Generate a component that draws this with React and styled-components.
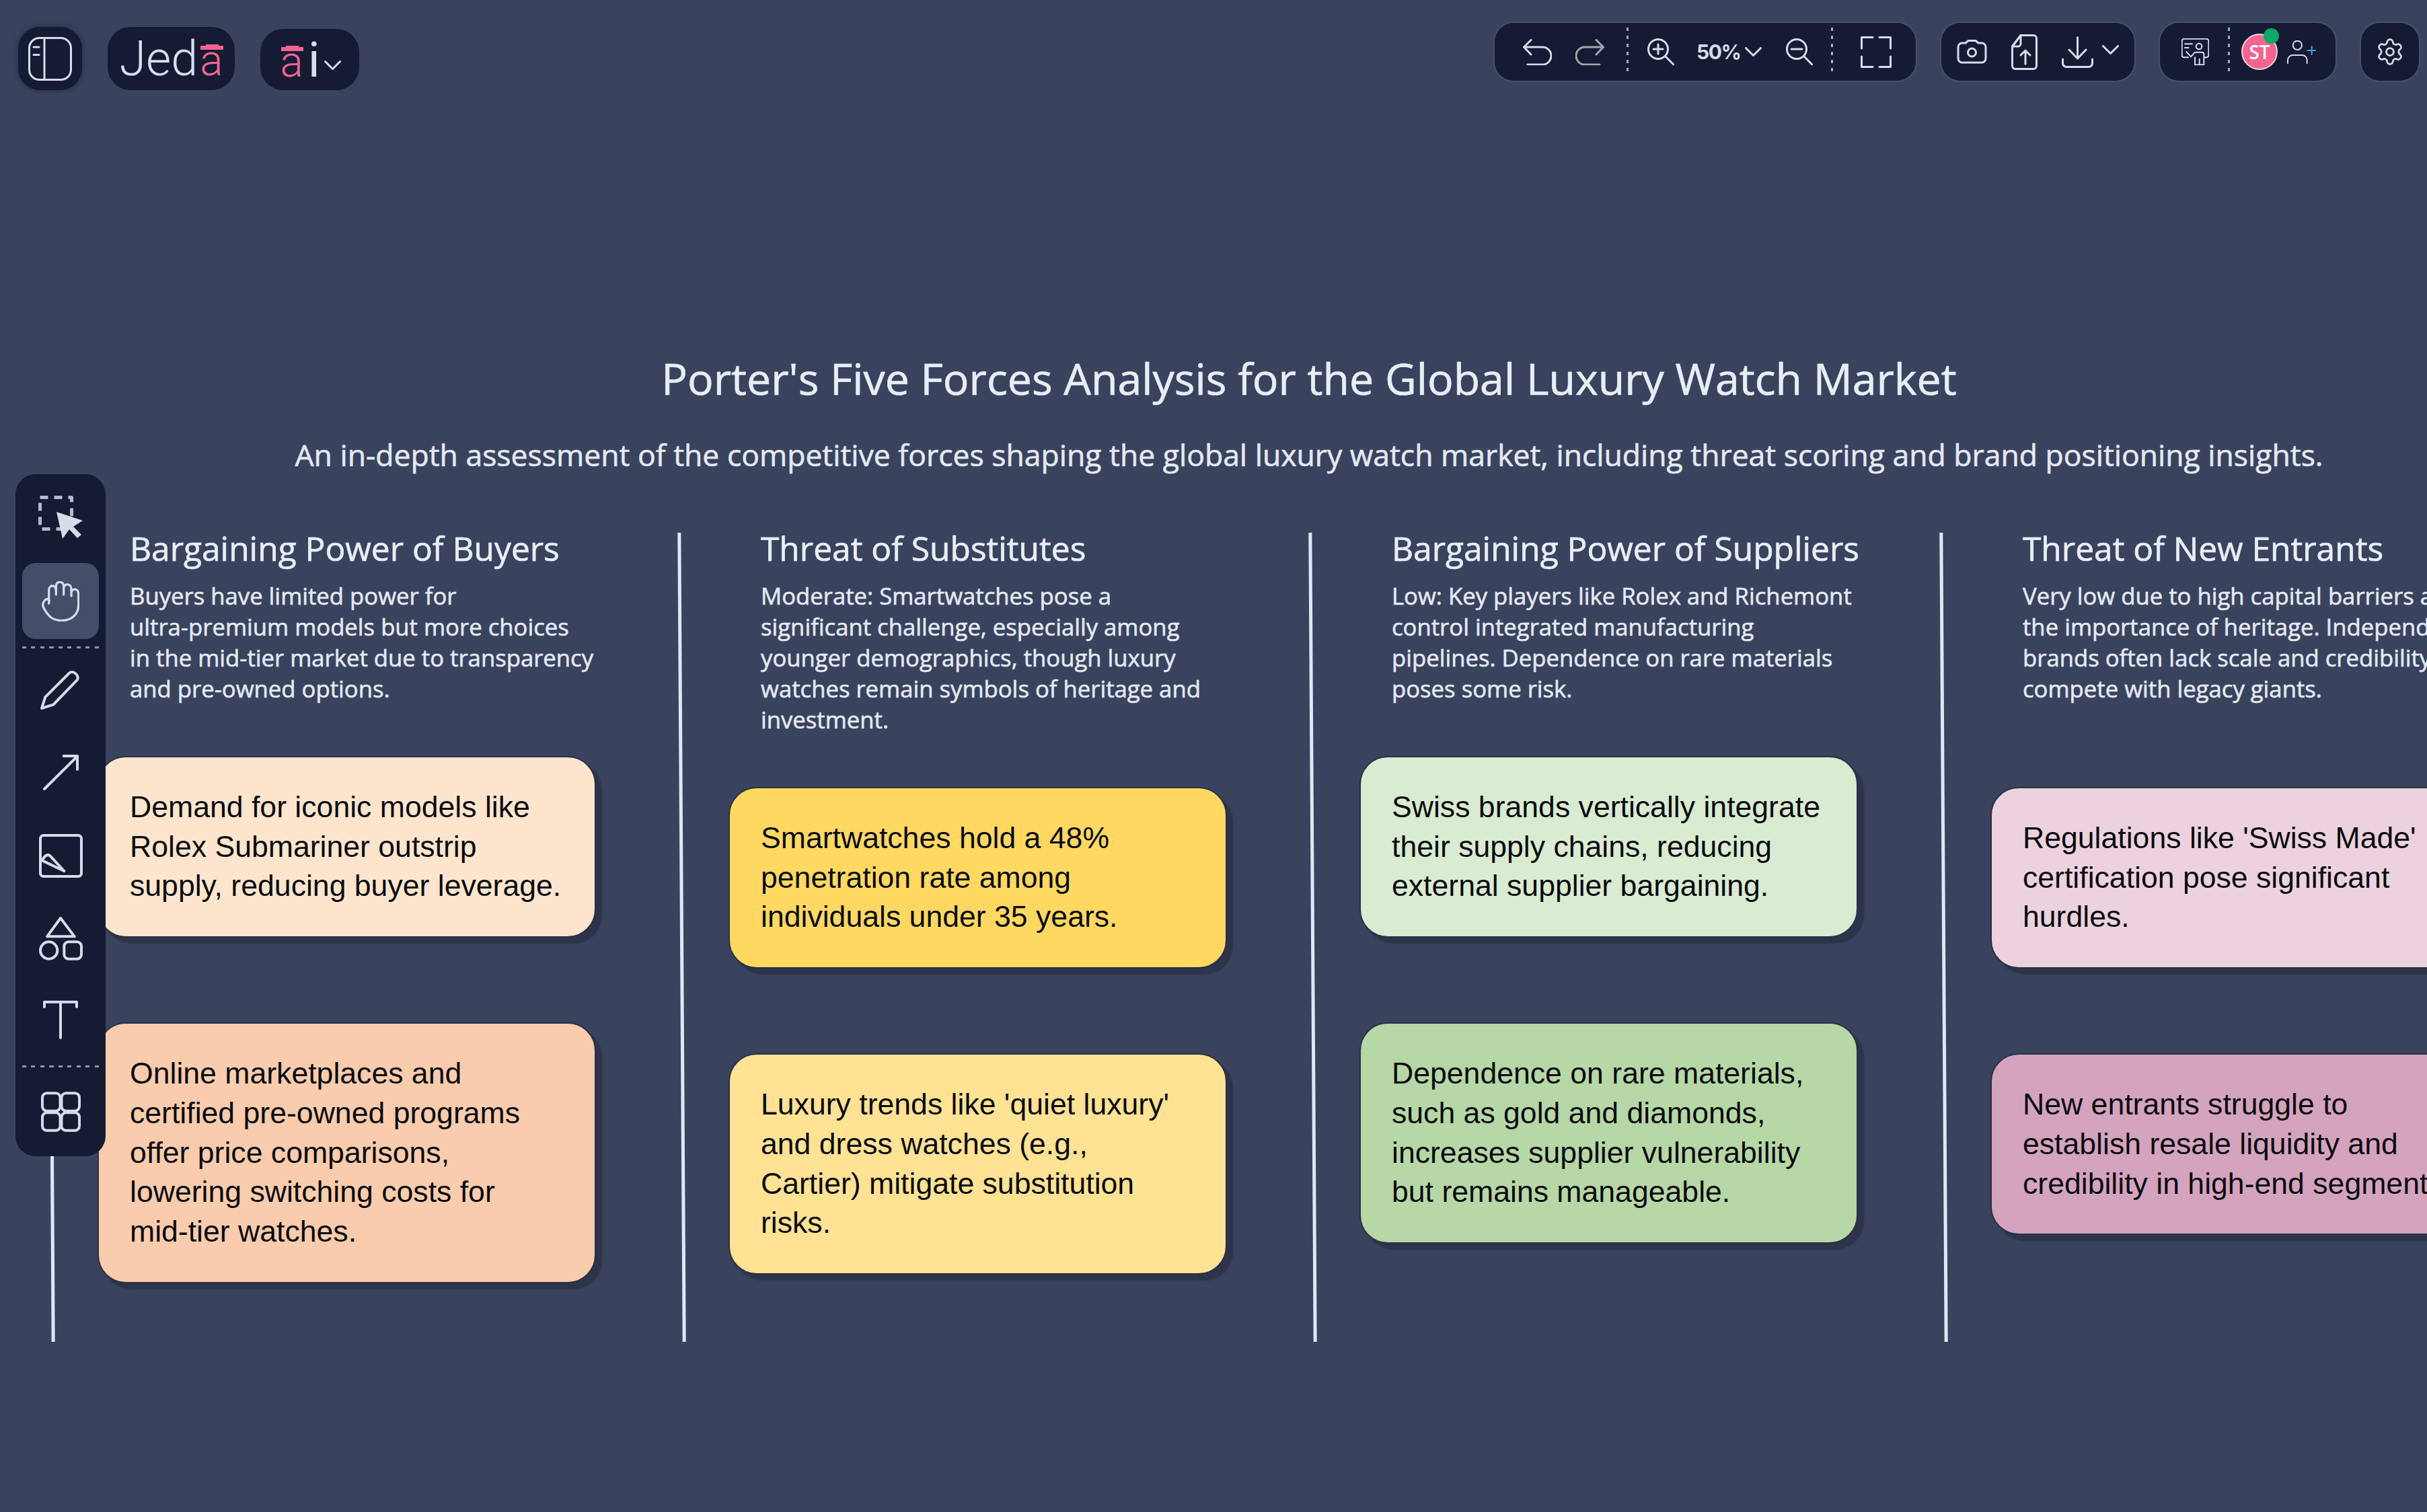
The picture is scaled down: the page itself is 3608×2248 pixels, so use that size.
import React from 'react';
import styled, { createGlobalStyle } from 'styled-components';
import { Settings } from 'lucide-react';

const GlobalStyle = createGlobalStyle`
  html, body {
    margin: 0;
    padding: 0;
    background: #3a435e;
    overflow: hidden;
  }
`;

const panel = '#151b33';
const ink = '#d5dcea';

// board content
const forces = [
  {
    title: 'Bargaining Power of Buyers',
    body: 'Buyers have limited power for\nultra-premium models but more choices\nin the mid-tier market due to transparency\nand pre-owned options.',
    cards: [
      { color: '#fde5cd', text: 'Demand for iconic models like\nRolex Submariner outstrip\nsupply, reducing buyer leverage.' },
      { color: '#f8ccac', text: 'Online marketplaces and\ncertified pre-owned programs\noffer price comparisons,\nlowering switching costs for\nmid-tier watches.' },
    ],
  },
  {
    title: 'Threat of Substitutes',
    body: 'Moderate: Smartwatches pose a\nsignificant challenge, especially among\nyounger demographics, though luxury\nwatches remain symbols of heritage and\ninvestment.',
    cards: [
      { color: '#ffd862', text: 'Smartwatches hold a 48%\npenetration rate among\nindividuals under 35 years.' },
      { color: '#ffe293', text: "Luxury trends like 'quiet luxury'\nand dress watches (e.g.,\nCartier) mitigate substitution\nrisks." },
    ],
  },
  {
    title: 'Bargaining Power of Suppliers',
    body: 'Low: Key players like Rolex and Richemont\ncontrol integrated manufacturing\npipelines. Dependence on rare materials\nposes some risk.',
    cards: [
      { color: '#d9ebd1', text: 'Swiss brands vertically integrate\ntheir supply chains, reducing\nexternal supplier bargaining.' },
      { color: '#b6d7a6', text: 'Dependence on rare materials,\nsuch as gold and diamonds,\nincreases supplier vulnerability\nbut remains manageable.' },
    ],
  },
  {
    title: 'Threat of New Entrants',
    body: 'Very low due to high capital barriers and\nthe importance of heritage. Independent\nbrands often lack scale and credibility to\ncompete with legacy giants.',
    bodyGap: '123px',
    cards: [
      { color: '#ecd2de', text: "Regulations like 'Swiss Made'\ncertification pose significant\nhurdles." },
      { color: '#d4a3bd', text: 'New entrants struggle to\nestablish resale liquidity and\ncredibility in high-end segments.' },
    ],
  },
];

// icons
const Svg = ({ w, h, vb, sw = 3, color = ink, children }) => (
  <svg
    width={w}
    height={h}
    viewBox={vb || `0 0 ${w} ${h}`}
    fill="none"
    stroke={color}
    strokeWidth={sw}
    strokeLinecap="round"
    strokeLinejoin="round"
  >
    {children}
  </svg>
);

const PanelIcon = () => (
  <Svg w={65} h={65}>
    <rect x="1.5" y="1.5" width="62" height="62" rx="15" />
    <path d="M24 1.5V63.5M8 15H16M8 26.5H16" />
  </Svg>
);
const Undo = () => (
  <Svg w={43} h={39}>
    <path d="M12 1.5L1.5 12L12 23M1.5 12H29A13 13 0 0 1 29 38H7" />
  </Svg>
);
const Redo = () => (
  <Svg w={43} h={39} color="#a3a7ae">
    <path d="M31 1.5L41.5 12L31 23M41.5 12H14A13 13 0 0 0 14 38H36" />
  </Svg>
);
const ZoomIn = () => (
  <Svg w={40} h={40}>
    <circle cx="16" cy="16" r="14.5" />
    <path d="M27 27L39 39M16 9V23M9 16H23" />
  </Svg>
);
const ZoomOut = () => (
  <Svg w={40} h={40}>
    <circle cx="16" cy="16" r="14.5" />
    <path d="M27 27L39 39M8 16H24" />
  </Svg>
);
const Chevron = () => (
  <Svg w={25} h={14}>
    <path d="M1.5 1.5L12.5 12.5L23.5 1.5" />
  </Svg>
);
const Fullscreen = () => (
  <Svg w={46} h={47}>
    <path d="M18 1.5H1.5V18M28 1.5H44.5V18M1.5 30V45.5H18M44.5 30V45.5H28" />
  </Svg>
);
const Camera = () => (
  <Svg w={45} h={36}>
    <path d="M2 11A6 6 0 0 1 8 5H13L17 1.5H28L32 5H37A6 6 0 0 1 43 11V28A6 6 0 0 1 37 34H8A6 6 0 0 1 2 28Z" />
    <circle cx="22.5" cy="19" r="6" />
  </Svg>
);
const FileUpload = () => (
  <Svg w={39} h={53}>
    <path d="M14 1.5H33A4.5 4.5 0 0 1 37.5 6V47A4.5 4.5 0 0 1 33 51.5H6A4.5 4.5 0 0 1 1.5 47V18Z" />
    <path d="M14 1.5L1.5 18H10A4 4 0 0 0 14 14ZM21 44V24M14 31L21 24L28 31" />
  </Svg>
);
const Download = () => (
  <Svg w={47} h={47}>
    <path d="M23.5 1.5V33M11 20L23.5 33L36 20M1.5 34V40A5.5 5.5 0 0 0 7 45.5H40A5.5 5.5 0 0 0 45.5 40V34" />
  </Svg>
);
const Presenter = () => (
  <Svg w={41} h={40} vb="0 0 123 120" sw={6}>
    <path d="M30 85H12A10 10 0 0 1 2 75V12A10 10 0 0 1 12 2H111A10 10 0 0 1 121 12V75A10 10 0 0 1 111 85H101" />
    <path d="M15 25H48M15 42H32" />
    <circle cx="78" cy="36" r="13" />
    <path d="M22 60L42 82L60 62H92A8 8 0 0 1 100 70V118H60V85M80 92V118" />
  </Svg>
);
const AddUser = () => (
  <Svg w={43} h={35} vb="0 0 129 105" sw={6}>
    <circle cx="46" cy="22" r="20" />
    <path d="M3 102V88A22 22 0 0 1 25 66H67A22 22 0 0 1 89 88V102" />
    <path d="M92 45H127M110 27V63" stroke="#3ba3e3" />
  </Svg>
);

const SelectIcon = () => (
  <Svg w={66} h={65} sw={5}>
    <rect x="2.5" y="2.5" width="47" height="47" strokeDasharray="12 9" stroke="#b3bac8" strokeLinecap="butt" />
    <path d="M27 24L66 37L52 46L64 58L58 63L46 50L36 64Z" fill="#d5dcea" stroke="none" />
  </Svg>
);
const HandIcon = () => (
  <Svg w={56} h={60} vb="0 0 168 180" sw={10}>
    <path d="M32 100V42C32 14 62 14 64 42V60M64 42V22C64 -2 98 -2 98 22V60M98 34C98 8 132 8 132 36V66M132 54C134 30 164 30 164 58V108C164 150 130 176 90 176C50 176 30 160 8 118C-2 96 22 68 34 86" />
  </Svg>
);
const PencilIcon = () => (
  <Svg w={60} h={60} vb="0 0 180 180" sw={12}>
    <path d="M6 174L22 124L128 18C146 0 180 32 162 50L58 158Z" />
  </Svg>
);
const ArrowIcon = () => (
  <Svg w={53} h={53} vb="0 0 159 159" sw={12}>
    <path d="M6 153L152 8M92 6H153V66" />
  </Svg>
);
const ImageIcon = () => (
  <Svg w={65} h={65} vb="0 0 195 195" sw={12}>
    <rect x="6" y="6" width="183" height="183" rx="14" />
    <path d="M14 118C25 95 40 88 50 98L112 165Z" />
  </Svg>
);
const ShapesIcon = () => (
  <Svg w={65} h={65} vb="0 0 195 195" sw={12}>
    <path d="M96 6L158 88H36Z" />
    <circle cx="44" cy="150" r="38" />
    <rect x="112" y="112" width="77" height="76" rx="20" />
  </Svg>
);
const TextIcon = () => (
  <Svg w={52} h={58} vb="0 0 156 174" sw={12} >
    <path d="M6 30V8H150V30M78 8V168" />
  </Svg>
);
const GridIcon = () => (
  <Svg w={59} h={60} vb="0 0 178 180" sw={12}>
    <rect x="6" y="6" width="80" height="80" rx="20" />
    <rect x="92" y="6" width="80" height="80" rx="20" />
    <rect x="6" y="94" width="80" height="80" rx="20" />
    <rect x="92" y="94" width="80" height="80" rx="20" />
  </Svg>
);

const App = () => {
  return (
    <Page>
      <GlobalStyle />

      {/* top bar */}
      <TopBar>
        <LeftCluster>
          <SquareButton>
            <PanelIcon />
          </SquareButton>
          <LogoButton>
            Jed<Pink>ā</Pink>
          </LogoButton>
          <AiButton>
            <Pink>ā</Pink>
            <AiLetter>i</AiLetter>
            <AiChevron>
              <Chevron />
            </AiChevron>
          </AiButton>
        </LeftCluster>

        <RightCluster>
          <ToolGroup>
            <Section $pad="42px" $gap="35px" $width="197px">
              <Undo />
              <Redo />
            </Section>
            <VDash />
            <Section $pad="30px" $width="304px">
              <ZoomIn />
              <ZoomLabel>50%</ZoomLabel>
              <Chevron />
              <ZoomOutSlot>
                <ZoomOut />
              </ZoomOutSlot>
            </Section>
            <VDash />
            <Section $pad="43px" $width="125px">
              <Fullscreen />
            </Section>
          </ToolGroup>

          <ToolGroup>
            <Section $pad="23px" $gap="36px" $width="287px">
              <Camera />
              <FileUpload />
              <DownloadWrap>
                <Download />
                <Chevron />
              </DownloadWrap>
            </Section>
          </ToolGroup>

          <ToolGroup>
            <Section $pad="32px" $width="102px">
              <Presenter />
            </Section>
            <VDash />
            <Section $pad="19px" $gap="14px" $width="159px">
              <Avatar>
                ST
                <OnlineDot />
              </Avatar>
              <AddUser />
            </Section>
          </ToolGroup>

          <GearButton>
            <Settings size={44} strokeWidth={1.5} color={ink} />
          </GearButton>
        </RightCluster>
      </TopBar>

      {/* slide */}
      <Slide>
        <Title>Porter's Five Forces Analysis for the Global Luxury Watch Market</Title>
        <Subtitle>
          An in-depth assessment of the competitive forces shaping the global luxury watch market, including threat scoring and brand positioning insights.
        </Subtitle>

        <Columns>
          {forces.map((force) => (
            <Column key={force.title}>
              <Rule />
              <ColumnBody>
                <Heading>{force.title}</Heading>
                <Body $gap={force.bodyGap}>{force.body}</Body>
                {force.cards.map((card) => (
                  <Card key={card.text} $color={card.color}>
                    {card.text}
                  </Card>
                ))}
              </ColumnBody>
            </Column>
          ))}
        </Columns>
      </Slide>

      {/* left tools */}
      <ToolPanel>
        <ToolSlot $h="65px" $after="35px">
          <SelectIcon />
        </ToolSlot>
        <ToolSlot $h="113px" $after="11px" $active>
          <HandIcon />
        </ToolSlot>
        <HDash />
        <ToolSlot $h="60px" $after="67px" $top="31px">
          <PencilIcon />
        </ToolSlot>
        <ToolSlot $h="53px" $after="65px">
          <ArrowIcon />
        </ToolSlot>
        <ToolSlot $h="65px" $after="58px">
          <ImageIcon />
        </ToolSlot>
        <ToolSlot $h="65px" $after="59px">
          <ShapesIcon />
        </ToolSlot>
        <ToolSlot $h="58px" $after="39px">
          <TextIcon />
        </ToolSlot>
        <HDash />
        <ToolSlot $h="60px" $after="0" $top="36px">
          <GridIcon />
        </ToolSlot>
      </ToolPanel>
    </Page>
  );
};

export default App;

// style
const Page = styled.div`
  position: relative;
  width: 3608px;
  height: 2248px;
  overflow: hidden;
  background: #3a435e;
  font-family: 'Open Sans', 'Noto Sans', sans-serif;
`;

const TopBar = styled.div`
  display: flex;
  justify-content: space-between;
  align-items: flex-start;
  height: 134px;
  padding: 34px 12px 0 27px;
  box-sizing: border-box;
`;

const LeftCluster = styled.div`
  display: flex;
  align-items: flex-end;
  gap: 38px;
  height: 100px;
`;

const RightCluster = styled.div`
  display: flex;
  align-items: center;
  gap: 38px;
`;

const darkBox = `
  display: flex;
  align-items: center;
  justify-content: center;
  box-sizing: border-box;
  background: ${panel};
`;

const SquareButton = styled.div`
  ${darkBox}
  width: 95px;
  height: 94px;
  border-radius: 32px;
  box-shadow: 0 0 8px rgba(15, 20, 40, 0.5);
`;

const LogoButton = styled.div`
  ${darkBox}
  align-items: baseline;
  padding-top: 12px;
  width: 189px;
  height: 94px;
  border-radius: 34px;
  font-family: 'Roboto', sans-serif;
  font-size: 72px;
  font-weight: 300;
  line-height: 1;
  color: #d7deec;
`;

const AiButton = styled.div`
  ${darkBox}
  align-items: baseline;
  padding-top: 11px;
  width: 147px;
  height: 91px;
  border-radius: 34px;
  font-family: 'Roboto', sans-serif;
  font-size: 72px;
  font-weight: 300;
  line-height: 1;
  color: #d7deec;
`;

const AiLetter = styled.span`
  margin-left: 7px;
  font-weight: 400;
`;

const AiChevron = styled.span`
  display: flex;
  align-self: center;
  margin: 6px 0 0 7px;
`;

// the logo's bar runs the full width of the letter
const Pink = styled.span`
  position: relative;
  margin-left: 3px;
  color: #f4648f;
  font-size: 64px;

  &::before {
    content: '';
    position: absolute;
    top: 9px;
    left: 1px;
    right: 0;
    height: 6px;
    background: #f4648f;
  }
`;

const ToolGroup = styled.div`
  ${darkBox}
  height: 86px;
  border-radius: 28px;
  box-shadow: 0 0 0 2px #465069;
`;

const Section = styled.div`
  display: flex;
  align-items: center;
  box-sizing: border-box;
  width: ${(p) => p.$width};
  padding-left: ${(p) => p.$pad};
  gap: ${(p) => p.$gap || 0};
`;

const VDash = styled.div`
  width: 3px;
  height: 72px;
  margin: 0 -1.5px;
  background: repeating-linear-gradient(to bottom, #a2abbb 0 5px, transparent 5px 12px);
`;

const ZoomLabel = styled.span`
  margin: 0 7px 0 33px;
  font-family: 'Inter', sans-serif;
  font-size: 30px;
  font-weight: 700;
  letter-spacing: -1.5px;
  color: ${ink};
`;

const ZoomOutSlot = styled.span`
  display: flex;
  margin-left: 36px;
`;

const DownloadWrap = styled.div`
  display: flex;
  align-items: center;
  gap: 13px;

  & svg:last-child {
    margin-bottom: 6px;
  }
`;

const Avatar = styled.div`
  position: relative;
  display: flex;
  align-items: center;
  justify-content: center;
  box-sizing: border-box;
  width: 54px;
  height: 54px;
  border: 2px solid #f1d5df;
  border-radius: 50%;
  background: #f4648f;
  color: #fff;
  font-size: 28px;
  font-weight: 600;
`;

const OnlineDot = styled.span`
  position: absolute;
  top: -10px;
  right: -4px;
  width: 23px;
  height: 23px;
  border-radius: 50%;
  background: #0fa968;
`;

const GearButton = styled.div`
  ${darkBox}
  width: 86px;
  height: 86px;
  border-radius: 28px;
  box-shadow: 0 0 0 2px #465069;
`;

const Slide = styled.div`
  width: 3892px;
`;

const Title = styled.h1`
  margin: 389px 0 0;
  font-size: 64.4px;
  font-weight: 400;
  line-height: 78px;
  text-align: center;
  white-space: nowrap;
  -webkit-text-stroke: 0.7px #e8edf6;
  color: #e8edf6;
`;

const Subtitle = styled.p`
  margin: 45px 0 0;
  font-size: 44.5px;
  font-weight: 400;
  line-height: 60px;
  text-align: center;
  white-space: nowrap;
  -webkit-text-stroke: 0.6px #e4e9f3;
  color: #e4e9f3;
`;

const Columns = styled.div`
  display: grid;
  grid-template-columns: repeat(4, 938px);
  height: 1203px;
  margin: 86px 0 0 73px;
`;

const Column = styled.section`
  display: flex;
  align-items: flex-start;
`;

const Rule = styled.div`
  flex: none;
  width: 5px;
  height: 1203px;
  background: #dfe7f5;
  transform: skewX(0.35deg);
`;

const ColumnBody = styled.div`
  padding-left: 115px;
`;

const Heading = styled.h2`
  margin: 0;
  font-size: 49.7px;
  font-weight: 400;
  line-height: 46px;
  white-space: nowrap;
  -webkit-text-stroke: 0.7px #e8edf6;
  color: #e8edf6;
`;

const Body = styled.p`
  margin: 25px 0 ${(p) => p.$gap || '77px'};
  font-size: 34.7px;
  font-weight: 400;
  line-height: 46px;
  white-space: pre;
  -webkit-text-stroke: 0.6px #e4e9f3;
  color: #e4e9f3;
`;

const Card = styled.div`
  box-sizing: border-box;
  width: 741px;
  margin: 0 0 126px -48px;
  padding: 45px 46px;
  border: 2px solid #2a3044;
  border-radius: 42px;
  background: ${(p) => p.$color};
  box-shadow: 9px 9px 2px #2d3449;
  font-family: 'Liberation Sans', Arial, sans-serif;
  font-size: 44.6px;
  line-height: 58.7px;
  white-space: pre;
  color: #0b0b0f;
`;

const ToolPanel = styled.aside`
  position: absolute;
  top: 705px;
  left: 23px;
  display: flex;
  flex-direction: column;
  box-sizing: border-box;
  width: 134px;
  height: 1014px;
  padding: 32px 10px 0;
  border-radius: 30px;
  background: ${panel};
`;

const ToolSlot = styled.div`
  flex: none;
  display: flex;
  align-items: center;
  justify-content: center;
  height: ${(p) => p.$h};
  margin-top: ${(p) => p.$top || 0};
  margin-bottom: ${(p) => p.$after};
  border-radius: 20px;
  background: ${(p) => (p.$active ? '#434e68' : 'transparent')};
`;

const HDash = styled.div`
  flex: none;
  height: 3px;
  background: repeating-linear-gradient(to right, #8e97a9 0 6px, transparent 6px 13.5px);
`;
